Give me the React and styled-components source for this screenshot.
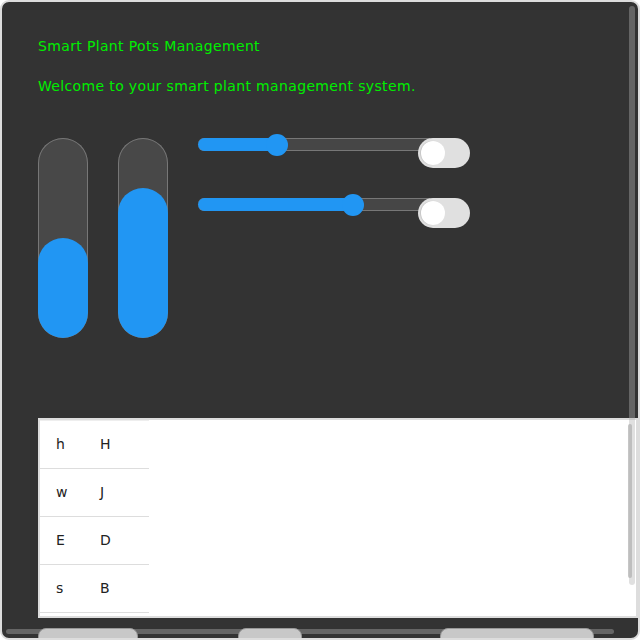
import React from "react";
import styled, { createGlobalStyle } from "styled-components";

const Global = createGlobalStyle`
  html, body { margin: 0; padding: 0; background: #fff; }
  * { box-sizing: border-box; }
`;

const Frame = styled.div`
  position: relative;
  width: 640px;
  height: 640px;
  border: 2px solid #ddd;
  border-radius: 9px;
  background: #333;
  overflow: hidden;
  font-family: "DejaVu Sans", Verdana, sans-serif;
`;

const Content = styled.div`
  padding: 34px 36px 0 36px;
`;

const Heading = styled.div`
  color: #00ee00;
  font-size: 14px;
  line-height: 20px;
  letter-spacing: 0.35px;
  margin-top: ${(p) => p.$gap || 0}px;
`;

const Controls = styled.div`
  display: flex;
  gap: 30px;
  margin-top: 42px;
`;

const VTrack = styled.div`
  width: 50px;
  height: 200px;
  border-radius: 25px;
  background: #484848;
  box-shadow: inset 0 0 0 1px #777;
  display: flex;
  flex-direction: column;
  justify-content: flex-end;
  overflow: hidden;
`;

const VFill = styled.div`
  width: 100%;
  border-radius: 25px;
  background: #2196f3;
`;

const HColumn = styled.div`
  display: flex;
  flex-direction: column;
  gap: 30px;
`;

const HRow = styled.div`
  display: flex;
  align-items: flex-start;
`;

const HTrack = styled.div`
  position: relative;
  width: 232px;
  height: 13px;
  background: #464646;
  border: 1px solid #777;
  border-left: none;
  border-radius: 6px 0 0 6px;
  display: flex;
`;

const HFill = styled.div`
  height: 13px;
  margin-top: -1px;
  background: #2196f3;
  border-radius: 6.5px 0 0 6.5px;
  position: relative;
`;

const Knob = styled.div`
  position: absolute;
  right: -11px;
  top: -4.5px;
  width: 22px;
  height: 22px;
  border-radius: 50%;
  background: #2196f3;
`;

const Toggle = styled.div`
  position: relative;
  z-index: 1;
  margin-left: -12px;
  width: 52px;
  height: 30px;
  border-radius: 15px;
  background: #e0e0e0;
  padding: 3px;
`;

const ToggleDot = styled.div`
  width: 24px;
  height: 24px;
  border-radius: 50%;
  background: #fff;
  box-shadow: -1px 0 1px rgba(0, 0, 0, 0.12);
`;

const TableBox = styled.div`
  position: relative;
  margin-top: 80px;
  width: 600px;
  height: 200px;
  border: 2px solid #ddd;
  background: #fff;
  overflow: hidden;
`;

const Table = styled.table`
  border-collapse: collapse;
  border-top: 1px solid #eee;
  font-size: 14px;
  color: #222;
`;

const Row = styled.tr`
  height: 48px;
  border-bottom: 1px solid #ddd;
`;

const Cell = styled.td`
  padding: 0 0 2px 16px;
  width: ${(p) => p.$w}px;
  vertical-align: middle;
`;

const InnerThumb = styled.div`
  position: absolute;
  right: 4px;
  top: 4px;
  width: 4px;
  height: 154px;
  border-radius: 2px;
  background: #c6c6c6;
`;

const Buttons = styled.div`
  display: flex;
  margin-top: 10px;
`;

const Button = styled.button`
  position: relative;
  z-index: 2;
  width: ${(p) => p.$w}px;
  margin-left: ${(p) => p.$ml || 0}px;
  height: 36px;
  border: 1px solid #999;
  border-radius: 8px;
  background: #c8c8c8;
  flex-shrink: 0;
`;

const ScrollThumb = styled.div`
  position: absolute;
  z-index: 1;
  border-radius: 3px;
  background: rgba(178, 178, 178, 0.4);
  ${(p) =>
    p.$vertical
      ? `right: 3px; top: 4px; width: 6px; height: 579px;`
      : `left: 4px; bottom: 4px; height: 5px; width: 608px;`}
`;

const VSlider = ({ value }) => (
  <VTrack>
    <VFill style={{ height: `${value}%` }} />
  </VTrack>
);

const HSlider = ({ value }) => (
  <HTrack>
    <HFill style={{ width: `${value}%` }}>
      <Knob />
    </HFill>
  </HTrack>
);

const rows = [
  ["h", "H"],
  ["w", "J"],
  ["E", "D"],
  ["s", "B"],
];

export default function App() {
  return (
    <>
      <Global />
      <Frame>
        <Content>
          <Heading>Smart Plant Pots Management</Heading>
          <Heading $gap={20}>Welcome to your smart plant management system.</Heading>
          <Controls>
            <VSlider value={50} />
            <VSlider value={75} />
            <HColumn>
              <HRow>
                <HSlider value={34} />
                <Toggle>
                  <ToggleDot />
                </Toggle>
              </HRow>
              <HRow>
                <HSlider value={67} />
                <Toggle>
                  <ToggleDot />
                </Toggle>
              </HRow>
            </HColumn>
          </Controls>
          <TableBox>
            <Table>
              <tbody>
                {rows.map(([a, b], i) => (
                  <Row key={i}>
                    <Cell $w={44}>{a}</Cell>
                    <Cell $w={65}>{b}</Cell>
                  </Row>
                ))}
              </tbody>
            </Table>
            <InnerThumb />
          </TableBox>
          <Buttons>
            <Button $w={100} aria-label="Add plant" />
            <Button $w={64} $ml={100} aria-label="Edit" />
            <Button $w={154} $ml={138} aria-label="Remove plant" />
          </Buttons>
        </Content>
        <ScrollThumb $vertical />
        <ScrollThumb />
      </Frame>
    </>
  );
}
